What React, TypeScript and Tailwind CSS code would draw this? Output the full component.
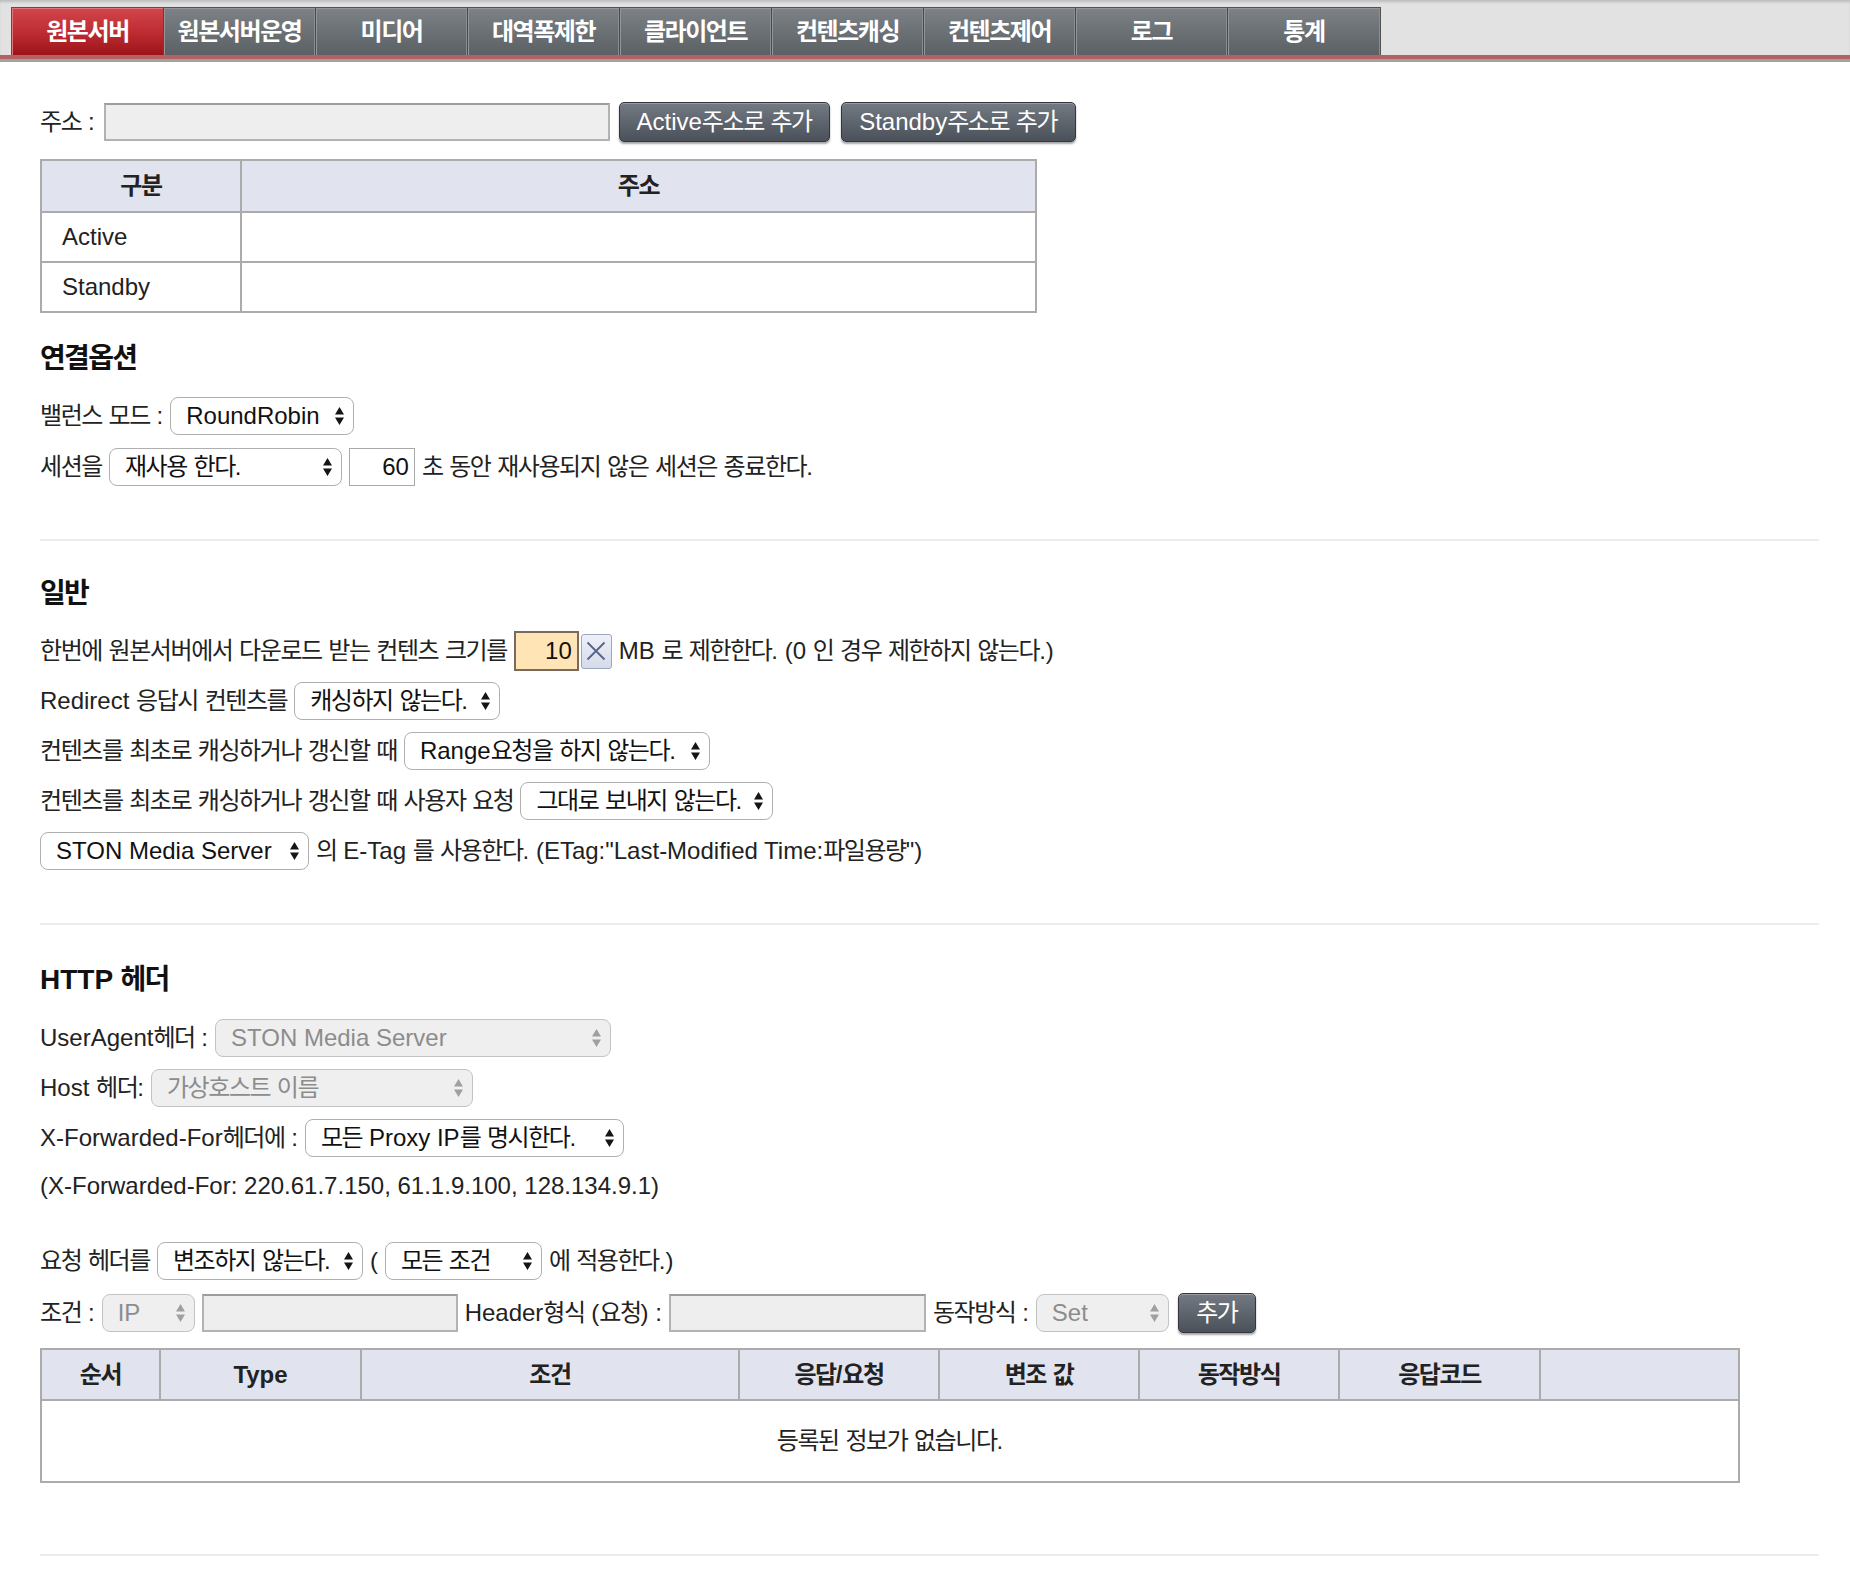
import React from 'react';

const tabs = ['원본서버', '원본서버운영', '미디어', '대역폭제한', '클라이언트', '컨텐츠캐싱', '컨텐츠제어', '로그', '통계'];

const headerCols = [
    { label: '순서', w: 'w-[119px]' },
    { label: 'Type', w: 'w-[201px]' },
    { label: '조건', w: 'w-[378px]' },
    { label: '응답/요청', w: 'w-[200px]' },
    { label: '변조 값', w: 'w-[200px]' },
    { label: '동작방식', w: 'w-[200px]' },
    { label: '응답코드', w: 'w-[201px]' },
    { label: '', w: 'w-[199px]' },
];

// Hangul in Noto CJK runs wider than the original font, so tighten Hangul runs only
function T({ children }: { children: string }) {
    const parts = children.split(/([\uac00-\ud7a3]+)/);
    return (
        <>
            {parts.map((p, i) =>
                i % 2 === 1 ? (
                    <span key={i} className="tracking-[-0.06em]">
                        {p}
                    </span>
                ) : (
                    p
                )
            )}
        </>
    );
}

function Arrows({ disabled }: { disabled?: boolean }) {
    return (
        <svg width="11" height="22" viewBox="0 0 11 22" className="shrink-0">
            <path d="M1 9.5 L5.5 2 L10 9.5 Z M1 12.5 L5.5 20 L10 12.5 Z" fill={disabled ? '#a0a0a0' : '#151515'} />
        </svg>
    );
}

function Select({ value, w, disabled }: { value: string; w: string; disabled?: boolean }) {
    return (
        <div
            className={`flex h-[38px] shrink-0 items-center justify-between rounded-[8px] border-[1.5px] pl-[15px] pr-[8px] ${
                disabled ? 'border-[#c3c3c3] bg-[#efefef] text-[#8c8c8c]' : 'border-[#afafaf] bg-white text-[#111]'
            } ${w}`}
        >
            <span className="whitespace-nowrap">
                <T>{value}</T>
            </span>
            <Arrows disabled={disabled} />
        </div>
    );
}

function GrayInput({ w }: { w: string }) {
    return <div className={`h-[38px] shrink-0 border-2 border-[#b2b2b2] border-t-[#9c9c9c] bg-[#eeeeee] ${w}`} />;
}

function DarkButton({ label, w }: { label: string; w: string }) {
    return (
        <button
            type="button"
            className={`flex h-[40px] shrink-0 items-center justify-center rounded-[5px] border border-[#33373d] bg-linear-to-b from-[#747a83] to-[#4b5159] text-white shadow-[0_2px_2px_rgba(0,0,0,0.35),inset_0_1px_0_rgba(255,255,255,0.25)] ${w}`}
        >
            <span className="whitespace-nowrap">
                <T>{label}</T>
            </span>
        </button>
    );
}

function Row({ children, className = '' }: { children: React.ReactNode; className?: string }) {
    return <div className={`flex h-[40px] items-center gap-[7px] whitespace-nowrap ${className}`}>{children}</div>;
}

function Text({ children }: { children: string }) {
    return (
        <span>
            <T>{children}</T>
        </span>
    );
}

function Heading({ children, className = '' }: { children: string; className?: string }) {
    return (
        <h2 className={`h-[30px] text-[28px] font-bold leading-[30px] text-[#111] ${className}`}>
            <T>{children}</T>
        </h2>
    );
}

function Divider({ className = '' }: { className?: string }) {
    return <div className={`h-[2px] bg-[#ececec] ${className}`} />;
}

export default function App() {
    return (
        <div className="min-h-[1572px] bg-white font-['Liberation_Sans','Noto_Sans_CJK_KR',sans-serif] text-[24px] text-[#222]">
            {/* Tab bar */}
            <div className="h-[55px] bg-[#e2e2e2] pt-[7px] pl-[11px] shadow-[inset_0_3px_3px_-1px_#bcbcbc]">
                <div className="flex h-[48px] w-fit border border-b-0 border-[#515151]">
                    {tabs.map((t, i) => (
                        <div
                            key={t}
                            className={`flex w-[152px] items-center justify-center border-r border-[#4a4a4a] text-[24px] font-bold text-white last:border-r-0 ${
                                i === 0
                                    ? 'bg-linear-to-b from-[#d0454b] via-[#bf2d33] to-[#9c1218] shadow-[inset_1px_1px_0_#e0767a]'
                                    : 'bg-linear-to-b from-[#7d8286] to-[#5b6064] shadow-[inset_1px_1px_0_#92969a,inset_-1px_0_0_#8a8e92]'
                            }`}
                        >
                            <span>
                                <T>{t}</T>
                            </span>
                        </div>
                    ))}
                </div>
            </div>
            <div className="h-[4px] bg-[#b36262]" />
            <div className="h-[3px] bg-[#a2a2a2]" />

            <div className="pl-[40px] pr-[31px]">
                {/* 주소 */}
                <Row className="mt-[40px] gap-[9px]">
                    <Text>주소 :</Text>
                    <GrayInput w="w-[506px]" />
                    <DarkButton label="Active주소로 추가" w="w-[211px]" />
                    <DarkButton label="Standby주소로 추가" w="w-[235px] ml-[2px]" />
                </Row>

                <table className="mt-[17px] w-[997px] border-collapse border-2 border-[#ababab]">
                    <thead>
                        <tr className="h-[52px] bg-[#e1e4ee]">
                            <th className="w-[200px] border-2 border-[#ababab] font-bold text-[#222]">
                                <T>구분</T>
                            </th>
                            <th className="border-2 border-[#ababab] font-bold text-[#222]">
                                <T>주소</T>
                            </th>
                        </tr>
                    </thead>
                    <tbody>
                        <tr className="h-[50px]">
                            <td className="border-2 border-[#ababab] pl-[20px]">Active</td>
                            <td className="border-2 border-[#ababab]" />
                        </tr>
                        <tr className="h-[50px]">
                            <td className="border-2 border-[#ababab] pl-[20px]">Standby</td>
                            <td className="border-2 border-[#ababab]" />
                        </tr>
                    </tbody>
                </table>

                {/* 연결옵션 */}
                <Heading className="mt-[31px]">연결옵션</Heading>
                <Row className="mt-[22px]">
                    <Text>밸런스 모드 :</Text>
                    <Select value="RoundRobin" w="w-[184px]" />
                </Row>
                <Row className="mt-[11px]">
                    <Text>세션을</Text>
                    <Select value="재사용 한다." w="w-[233px]" />
                    <div className="flex h-[38px] w-[66px] items-center justify-end border-[1.5px] border-[#a9a9a9] pr-[5px] text-[#111]">60</div>
                    <Text>초 동안 재사용되지 않은 세션은 종료한다.</Text>
                </Row>

                <Divider className="mt-[52px]" />

                {/* 일반 */}
                <Heading className="mt-[38px]">일반</Heading>
                <Row className="mt-[22px]">
                    <Text>한번에 원본서버에서 다운로드 받는 컨텐츠 크기를</Text>
                    <div className="flex items-center gap-[2px]">
                        <div className="flex h-[40px] w-[65px] items-center justify-end border-2 border-[#7a6a5c] bg-[#ffe5b6] pr-[5px] text-[#111]">10</div>
                        <div className="flex h-[35px] w-[31px] items-center justify-center rounded-[3px] border border-[#9ba6c0] bg-linear-to-b from-[#eef1f8] to-[#d5dbe9]">
                            <svg width="22" height="22" viewBox="0 0 22 22">
                                <path d="M2.5 2.5 L19.5 19.5 M19.5 2.5 L2.5 19.5" stroke="#56648a" strokeWidth="1.8" />
                            </svg>
                        </div>
                    </div>
                    <Text>MB 로 제한한다. (0 인 경우 제한하지 않는다.)</Text>
                </Row>
                <Row className="mt-[10px]">
                    <Text>Redirect 응답시 컨텐츠를</Text>
                    <Select value="캐싱하지 않는다." w="w-[206px]" />
                </Row>
                <Row className="mt-[10px]">
                    <Text>컨텐츠를 최초로 캐싱하거나 갱신할 때</Text>
                    <Select value="Range요청을 하지 않는다." w="w-[306px]" />
                </Row>
                <Row className="mt-[10px]">
                    <Text>컨텐츠를 최초로 캐싱하거나 갱신할 때 사용자 요청</Text>
                    <Select value="그대로 보내지 않는다." w="w-[253px]" />
                </Row>
                <Row className="mt-[10px]">
                    <Select value="STON Media Server" w="w-[269px]" />
                    <Text>의 E-Tag 를 사용한다. (ETag:"Last-Modified Time:파일용량")</Text>
                </Row>

                <Divider className="mt-[52px]" />

                {/* HTTP 헤더 */}
                <Heading className="mt-[40px]">HTTP 헤더</Heading>
                <Row className="mt-[23px]">
                    <Text>UserAgent헤더 :</Text>
                    <Select value="STON Media Server" w="w-[396px]" disabled />
                </Row>
                <Row className="mt-[10px]">
                    <Text>Host 헤더:</Text>
                    <Select value="가상호스트 이름" w="w-[322px]" disabled />
                </Row>
                <Row className="mt-[10px]">
                    <Text>X-Forwarded-For헤더에 :</Text>
                    <Select value="모든 Proxy IP를 명시한다." w="w-[319px]" />
                </Row>
                <Row className="mt-[8px]">
                    <span>(X-Forwarded-For: 220.61.7.150, 61.1.9.100, 128.134.9.1)</span>
                </Row>

                <Row className="mt-[35px]">
                    <Text>요청 헤더를</Text>
                    <Select value="변조하지 않는다." w="w-[206px]" />
                    <span>(</span>
                    <Select value="모든 조건" w="w-[157px]" />
                    <Text>에 적용한다.)</Text>
                </Row>
                <Row className="mt-[12px]">
                    <Text>조건 :</Text>
                    <Select value="IP" w="w-[93px]" disabled />
                    <GrayInput w="w-[256px]" />
                    <Text>Header형식 (요청) :</Text>
                    <GrayInput w="w-[257px]" />
                    <Text>동작방식 :</Text>
                    <Select value="Set" w="w-[133px]" disabled />
                    <DarkButton label="추가" w="w-[78px] ml-[2px]" />
                </Row>

                <table className="mt-[15px] w-[1698px] table-fixed border-collapse border-2 border-[#ababab]">
                    <thead>
                        <tr className="h-[51px] bg-[#e1e4ee]">
                            {headerCols.map((c, i) => (
                                <th key={i} className={`border-2 border-[#ababab] font-bold text-[#222] ${c.w}`}>
                                    <T>{c.label}</T>
                                </th>
                            ))}
                        </tr>
                    </thead>
                    <tbody>
                        <tr className="h-[82px]">
                            <td colSpan={8} className="border-2 border-[#ababab] text-center">
                                <T>등록된 정보가 없습니다.</T>
                            </td>
                        </tr>
                    </tbody>
                </table>

                <Divider className="mt-[71px]" />
            </div>
        </div>
    );
}
